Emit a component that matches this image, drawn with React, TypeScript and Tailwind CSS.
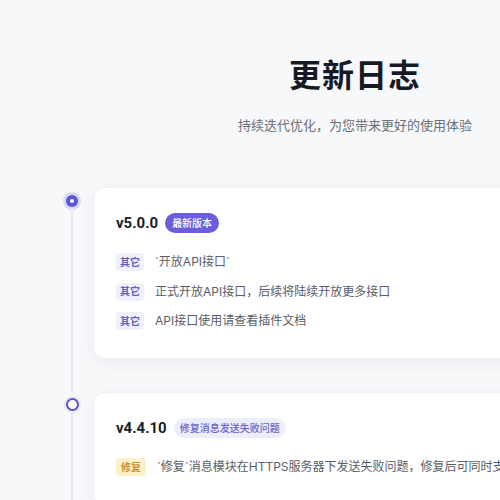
import React from "react";

type Item = { tag: string; kind: "other" | "fix"; text: string };
type Release = { version: string; badge: string; latest: boolean; items: Item[] };

const releases: Release[] = [
  {
    version: "v5.0.0",
    badge: "最新版本",
    latest: true,
    items: [
      { tag: "其它", kind: "other", text: "`开放API接口`" },
      { tag: "其它", kind: "other", text: "正式开放API接口，后续将陆续开放更多接口" },
      { tag: "其它", kind: "other", text: "API接口使用请查看插件文档" },
    ],
  },
  {
    version: "v4.4.10",
    badge: "修复消息发送失败问题",
    latest: false,
    items: [
      {
        tag: "修复",
        kind: "fix",
        text: "`修复`消息模块在HTTPS服务器下发送失败问题，修复后可同时支持HTTP与HTTPS",
      },
    ],
  },
];

function Dot({ active }: { active: boolean }) {
  if (active) {
    return (
      <div className="mt-[8px] w-[12px] h-[12px] rounded-full bg-[#5b57d9] ring-[3px] ring-[#5b57d9]/20 flex items-center justify-center">
        <div className="w-[4px] h-[4px] rounded-full bg-white" />
      </div>
    );
  }
  return (
    <div className="mt-[6px] w-[13px] h-[13px] rounded-full bg-white border-2 border-[#5a56c4] ring-[2px] ring-[#5a56c4]/10" />
  );
}

export default function App() {
  return (
    <div
      className="w-[500px] h-[500px] overflow-hidden bg-[#f7f8fa]"
      style={{ fontFamily: '"Inter", "Noto Sans CJK SC", sans-serif' }}
    >
      <div className="w-[710px] flex flex-col">
        <div className="flex flex-col items-center pt-[56px]">
          <h1 className="text-[32px] leading-[40px] font-bold text-[#161a24] tracking-[1px]">更新日志</h1>
          <p className="mt-[19px] text-[13px] leading-[20px] text-[#6b7078]">持续迭代优化，为您带来更好的使用体验</p>
        </div>

        <div className="mt-[52px] ml-[66px] flex flex-col">
          {releases.map((r, i) => (
            <div key={r.version} className="flex gap-[15px]">
              <div className="w-[12px] flex flex-col items-center">
                <Dot active={r.latest} />
                <div className="flex-1 w-[2px] bg-[#e9eaef]" />
              </div>
              <div className={i === 0 ? "pb-[33px]" : ""}>
                <div className="w-[580px] bg-white rounded-[12px] border border-[#f0f1f4] shadow-[0_4px_16px_rgba(30,40,80,0.05)] pl-[22px] pt-[23px] pb-[27px]">
                  <div className="flex items-center gap-[7px] h-[24px]">
                    <span
                      className="text-[15px] font-bold text-[#1a1d26]"
                      style={{ fontFamily: 'Roboto, "Noto Sans CJK SC", sans-serif' }}
                    >
                      {r.version}
                    </span>
                    {r.latest ? (
                      <span className="h-[20px] px-[7px] rounded-full bg-[#6b5ddb] text-white text-[10px] font-medium flex items-center">
                        {r.badge}
                      </span>
                    ) : (
                      <span className="h-[20px] px-[6px] rounded-full bg-[#eceefb] text-[#6a64c8] text-[10px] font-medium flex items-center">
                        {r.badge}
                      </span>
                    )}
                  </div>
                  <div className="mt-[17px] flex flex-col gap-[9.5px]">
                    {r.items.map((it, k) => (
                      <div key={k} className="flex items-center gap-[11px] h-[20px]">
                        <span
                          className={
                            it.kind === "fix"
                              ? "h-[18px] px-[5px] rounded-[4px] bg-[#fdf1cc] text-[#c8902e] text-[10px] font-semibold flex items-center"
                              : "h-[18px] px-[4px] rounded-[4px] bg-[#eef0fb] text-[#5f5fc4] text-[10px] font-semibold flex items-center"
                          }
                        >
                          {it.tag}
                        </span>
                        <span className="text-[12px] text-[#585d67] whitespace-nowrap">{it.text}</span>
                      </div>
                    ))}
                  </div>
                </div>
              </div>
            </div>
          ))}
        </div>
      </div>
    </div>
  );
}
